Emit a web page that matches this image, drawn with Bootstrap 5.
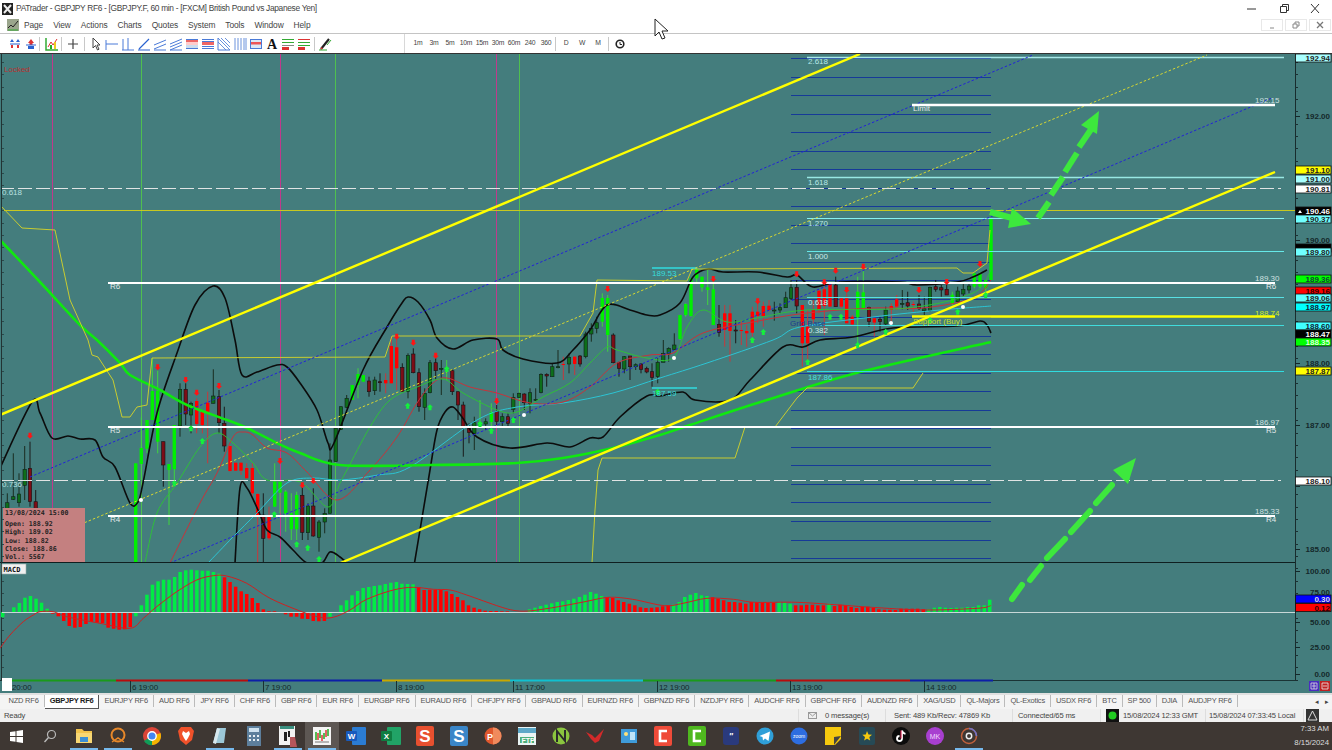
<!DOCTYPE html>
<html lang="en">
<head>
  <meta charset="UTF-8">
  <title>PATrader - GBPJPY RF6</title>
  <link href="https://cdn.jsdelivr.net/npm/bootstrap@5.3.3/dist/css/bootstrap.min.css" rel="stylesheet">
  <style>
    html, body { height: 750px; overflow: hidden; background: #fff; }
    body { font-family: "Liberation Sans", Arial, sans-serif; color: #333; }
    svg { display: block; }
    .app-shell { width: 1332px; height: 750px; position: relative; }

    .title-bar { height: 17px; font-size: 8.4px; letter-spacing: -.32px; color: #444; padding-left: 2px; gap: 3px; }
    .win-btns { gap: 17px; padding-right: 10px; }
    .menu-bar { height: 17px; font-size: 8.4px; color: #444; padding-left: 7px; border-bottom: 1px solid #c4c4c4; position: relative; }
    .menu-bar > span { letter-spacing: -.1px; margin-left: 10px; }
    .menu-bar > span:first-of-type { margin-left: 5px; }
    .mdi-btns { gap: 2px; margin-right: 1px; }
    .mdi-btn { width: 22px; height: 12px; border: 1px solid #e8e8e8; display: flex; align-items: center; justify-content: center; }
    .tool-bar { height: 19px; padding-left: 7px; font-size: 6.8px; color: #444; letter-spacing: -.2px; }
    .tool { width: 16px; display: flex; justify-content: center; text-align: center; white-space: nowrap; }
    .tool-sep { width: 1px; height: 14px; background: #c8c8c8; }
    .tf-divider { width: 1px; height: 19px; background: #d8d8d8; margin-left: 71px; margin-right: 5px; }

    .chart-wrap { height: 640px; background: #447d7d; border-top: 1px solid #333; }
    .chart-wrap text { font-family: "Liberation Sans", Arial, sans-serif; }
    .axis-txt { font-size: 8px; font-weight: 700; fill: #14282a; }
    .lvl-txt { font-size: 8px; fill: #b8e0e0; }
    .info-txt { font-family: "DejaVu Sans Mono", monospace !important; font-size: 6.6px; font-weight: 700; fill: #222; }
    .time-txt { font-size: 8px; fill: #14282a; letter-spacing: -.1px; }

    .tab-strip { height: 16px; background: #f4f4f4; border-top: 2px solid #e0e0e0; font-size: 7.5px; letter-spacing: -.22px; color: #555; white-space: nowrap; position: relative; padding-left: 3.5px; }
    .sym-tab { padding: 0 5px; border-right: 1px solid #bbb; line-height: 12px; height: 12px; }
    .sym-tab-on { font-weight: 700; color: #222; background: #fff; border-right: 1.5px solid #555; border-bottom: 1.5px solid #555; height: 14px; letter-spacing: -.28px; }
    .tab-scroll { position: absolute; right: 3px; top: 0; gap: 6px; color: #444; font-size: 7px; line-height: 13px; }

    .status-bar { height: 13px; background: #f0f0f0; font-size: 7.6px; letter-spacing: -.15px; color: #444; white-space: nowrap; }
    .st-cell { height: 13px; display: flex; align-items: center; border-left: 1px solid #ddd; flex: none; }

    .task-bar { height: 28px; background: #3e3733; color: #ddd; }
    .task-cell { width: 34.05px; height: 28px; display: flex; align-items: center; justify-content: center; flex: none; position: relative; }
    .task-on { background: #5d5753; }
    .task-open::after { content: ""; position: absolute; left: 3px; right: 3px; bottom: 0; height: 2px; background: #76b9ed; }
    .task-clock { font-size: 7.8px; line-height: 14px; text-align: right; padding-right: 3px; color: #ddd; }
    .task-icons { margin-left: -1px; }

    .mouse-cursor { position: absolute; left: 654px; top: 18px; }
  </style>
</head>
<body>
<div class="app-shell d-flex flex-column">

  <!-- window title -->
  <div class="title-bar d-flex align-items-center">
    <svg width="11" height="12" viewBox="0 0 11 12"><rect width="11" height="12" fill="#222"/><path d="M2 2l7 8M9 2l-7 8" stroke="#eee" stroke-width="2"/></svg>
    <span>PATrader - GBPJPY RF6 - [GBPJPY.F, 60 min - [FXCM] British Pound vs Japanese Yen]</span>
    <div class="win-btns d-flex align-items-center ms-auto">
      <svg width="14" height="10" viewBox="0 0 14 10"><path d="M1 5h9" stroke="#333"/></svg>
      <svg width="14" height="10" viewBox="0 0 14 10"><path d="M3.5 2.5h6v6h-6zM5.5 2.5v-2h6v6h-2" fill="none" stroke="#333"/></svg>
      <svg width="14" height="10" viewBox="0 0 14 10"><path d="M3 0l8 9M11 0l-8 9" stroke="#333"/></svg>
    </div>
  </div>

  <!-- menu -->
  <div class="menu-bar d-flex align-items-center">
    <svg width="12" height="12" viewBox="0 0 12 12"><rect width="12" height="12" fill="#9aa58c"/><path d="M1 9l3-3 2 2 5-6" stroke="#222" fill="none"/><path d="M1 11h10" stroke="#3a3"/></svg>
    <span>Page</span><span>View</span><span>Actions</span><span>Charts</span><span>Quotes</span><span>System</span><span>Tools</span><span>Window</span><span>Help</span>
    <div class="mdi-btns d-flex ms-auto">
      <div class="mdi-btn"><svg width="8" height="8" viewBox="0 0 8 8"><path d="M2 7h4" stroke="#888"/></svg></div>
      <div class="mdi-btn"><svg width="8" height="8" viewBox="0 0 8 8"><path d="M1 3h4v4H1zM3 3V1h4v4H5" fill="none" stroke="#888"/></svg></div>
      <div class="mdi-btn"><svg width="8" height="8" viewBox="0 0 8 8"><path d="M1 1l6 6M7 1L1 7" stroke="#777" stroke-width="1.3"/></svg></div>
    </div>
  </div>

  <!-- tool bar -->
  <div class="tool-bar d-flex align-items-center">
    <div class="tool"><svg width="12" height="12" viewBox="0 0 12 12"><path d="M1 4l2-3 2 3zM7 4l2-3 2 3z" fill="#2a62d0"/><path d="M1 6h10" stroke="#2a62d0"/><path d="M2 7h2v3H2zM8 7h2v3H8z" fill="#d33"/></svg></div>
    <div class="tool"><svg width="12" height="12" viewBox="0 0 12 12"><path d="M3 5l3-4 3 4z" fill="#d33"/><rect x="4.500" y="5" width="3" height="2" fill="#d33"/><path d="M1 7h10" stroke="#2a62d0"/><path d="M3 8h6v3H3z" fill="#2a62d0"/></svg></div>
    <div class="tool-sep" style="margin-right:4px"></div>
    <div class="tool"><svg width="14" height="14" viewBox="0 0 14 14"><path d="M1 1v12h12" fill="none" stroke="#3a3" stroke-width="1.500"/><path d="M3 10l3-5 2 3 4-6" fill="none" stroke="#d33"/><rect x="5" y="8" width="2" height="4" fill="#2a2"/><rect x="9" y="5" width="2" height="7" fill="#ec2"/></svg></div>
    <div class="tool-sep" style="margin:0 3px 0 1px"></div>
    <div class="tool"><svg width="14" height="14" viewBox="0 0 14 14"><path d="M7 2v10M2 7h10" stroke="#444" stroke-width="1.200"/></svg></div>
    <div class="tool-sep" style="margin:0 3px"></div>
    <div class="tool"><svg width="14" height="14" viewBox="0 0 14 14"><path d="M4 1v10l2.500-2.500L8.500 13l1.500-.8-2-4.200H11z" fill="#fff" stroke="#444"/></svg></div>
    <div class="tool"><svg width="14" height="14" viewBox="0 0 14 14"><path d="M1 7h12M1 3v10" stroke="#4a7ad8"/></svg></div>
    <div class="tool"><svg width="14" height="14" viewBox="0 0 14 14"><path d="M7 1v12M1 13h12M2 2v11" stroke="#4a7ad8"/></svg></div>
    <div class="tool"><svg width="14" height="14" viewBox="0 0 14 14"><path d="M2 12L12 2M1 13h12" stroke="#2a62d0" stroke-width="1.200"/></svg></div>
    <div class="tool"><svg width="14" height="14" viewBox="0 0 14 14"><path d="M1 8l12-5M1 12l12-5M1 13h12" stroke="#4a7ad8"/></svg></div>
    <div class="tool"><svg width="14" height="14" viewBox="0 0 14 14"><path d="M1 7l12-5M1 10l12-5M1 13l12-5" stroke="#4a7ad8"/><path d="M1 13h12" stroke="#4a7ad8"/></svg></div>
    <div class="tool"><svg width="14" height="14" viewBox="0 0 14 14"><rect x="1" y="3" width="12" height="2" fill="#e66"/><rect x="1" y="5" width="12" height="3" fill="#fcc"/><rect x="1" y="8" width="12" height="3" fill="#cde"/><path d="M1 2.500h12M1 11.500h12" stroke="#4a7ad8"/></svg></div>
    <div class="tool"><svg width="14" height="14" viewBox="0 0 14 14"><rect x="1" y="5" width="12" height="3" fill="#e66"/><path d="M1 2.500h12M1 4.500h12M1 9.500h12M1 11.500h12" stroke="#4a7ad8"/></svg></div>
    <div class="tool"><svg width="14" height="14" viewBox="0 0 14 14"><path d="M1 5l8 8M1 1l12 12M4 1l9 9M8 1l5 5" stroke="#6a92dc"/><path d="M1 1v12h12" fill="none" stroke="#4a7ad8"/></svg></div>
    <div class="tool"><svg width="14" height="14" viewBox="0 0 14 14"><path d="M2 1v12M5 1v12M8 1v12M11 1v12M13 1v12" stroke="#6a92dc"/></svg></div>
    <div class="tool"><svg width="14" height="14" viewBox="0 0 14 14"><rect x="1.500" y="2.500" width="11" height="9" fill="#dde8f4" stroke="#4a7ad8"/><rect x="2" y="5" width="10" height="2.500" fill="#e55"/></svg></div>
    <div class="tool"><svg width="14" height="14" viewBox="0 0 14 14"><text x="7" y="12" text-anchor="middle" font-family="Liberation Serif" font-weight="700" font-size="14" fill="#111">A</text></svg></div>
    <div class="tool"><svg width="14" height="14" viewBox="0 0 14 14"><path d="M1 2.500h12M1 5.500h12" stroke="#3a3"/><path d="M1 8.500h12" stroke="#888"/><rect x="1" y="10" width="7" height="3" fill="#d33"/></svg></div>
    <div class="tool"><svg width="14" height="14" viewBox="0 0 14 14"><path d="M1 2.500h12" stroke="#d33"/><path d="M1 5.500h12M1 8.500h12" stroke="#3a3"/><rect x="1" y="10" width="7" height="3" fill="#d33"/></svg></div>
    <div class="tool-sep" style="margin:0 2px"></div>
    <div class="tool"><svg width="14" height="14" viewBox="0 0 14 14"><path d="M3 12L11 2" stroke="#222" stroke-width="2.200"/><path d="M2 13l1.500-3 1.500 1.500z" fill="#d33"/><path d="M9 8l4-5M1 13h8" stroke="#3a3"/></svg></div>
    <div class="tf-divider"></div>
    <div class="tool">1m</div><div class="tool">3m</div><div class="tool">5m</div><div class="tool">10m</div><div class="tool">15m</div><div class="tool">30m</div><div class="tool">60m</div><div class="tool">240</div><div class="tool">360</div>
    <div class="tool-sep" style="margin:0 2px 0 1px"></div>
    <div class="tool">D</div><div class="tool">W</div><div class="tool">M</div>
    <div class="tool-sep" style="margin:0 3px 0 2px"></div>
    <div class="tool"><svg width="10" height="10" viewBox="0 0 10 10"><circle cx="5" cy="5" r="3.800" fill="none" stroke="#222" stroke-width="1.600"/><path d="M5 3v2.500h2" fill="none" stroke="#222"/></svg></div>
  </div>

  <!-- chart -->
  <div class="chart-wrap flex-shrink-0">
    <svg id="chart" width="1332" height="639" viewBox="0 54 1332 639"></svg>
  </div>

  <!-- symbol tabs -->
  <div class="tab-strip d-flex align-items-start">
    <span class="sym-tab">NZD RF6</span>
    <span class="sym-tab sym-tab-on">GBPJPY RF6</span>
    <span class="sym-tab">EURJPY RF6</span><span class="sym-tab">AUD RF6</span><span class="sym-tab">JPY RF6</span><span class="sym-tab">CHF RF6</span><span class="sym-tab">GBP RF6</span><span class="sym-tab">EUR RF6</span><span class="sym-tab">EURGBP RF6</span><span class="sym-tab">EURAUD RF6</span><span class="sym-tab">CHFJPY RF6</span><span class="sym-tab">GBPAUD RF6</span><span class="sym-tab">EURNZD RF6</span><span class="sym-tab">GBPNZD RF6</span><span class="sym-tab">NZDJPY RF6</span><span class="sym-tab">AUDCHF RF6</span><span class="sym-tab">GBPCHF RF6</span><span class="sym-tab">AUDNZD RF6</span><span class="sym-tab">XAG/USD</span><span class="sym-tab">QL-Majors</span><span class="sym-tab">QL-Exotics</span><span class="sym-tab">USDX RF6</span><span class="sym-tab">BTC</span><span class="sym-tab">SP 500</span><span class="sym-tab">DJIA</span><span class="sym-tab">AUDJPY RF6</span>
    <div class="tab-scroll d-flex"><span>&#9666;</span><span>&#9656;</span></div>
  </div>

  <!-- status bar -->
  <div class="status-bar d-flex align-items-center">
    <span class="ps-1" style="width:798px">Ready</span>
    <div class="st-cell" style="width:87px;padding-left:9px;gap:8px"><svg width="9" height="7" viewBox="0 0 9 7"><rect x=".5" y=".5" width="8" height="6" fill="#eee" stroke="#999"/><path d="M.5.500l4 3.500 4-3.500" fill="none" stroke="#999"/></svg><span>0 message(s)</span></div>
    <div class="st-cell" style="width:127px;padding-left:8px">Sent: 489 Kb/Recv: 47869 Kb</div>
    <div class="st-cell" style="width:88px;padding-left:5px">Connected/65 ms</div>
    <div class="st-cell" style="width:105px;padding-left:5px;gap:4px"><svg width="13" height="13" viewBox="0 0 13 13"><rect width="13" height="13" fill="#111"/><circle cx="6.500" cy="6.500" r="4" fill="#2c2"/></svg><span>15/08/2024 12:33 GMT</span></div>
    <div class="st-cell" style="width:98px;padding-left:3px">15/08/2024 07:33:45 Local</div>
    <div class="st-cell" style="padding-left:2px"><svg width="13" height="13" viewBox="0 0 13 13"><rect width="13" height="13" fill="#333"/><path d="M6.500 2L2 11h9z" fill="none" stroke="#ddd"/></svg></div>
  </div>

  <!-- windows task bar -->
  <div class="task-bar d-flex align-items-center">
    <div class="task-icons d-flex">
      <div class="task-cell"><svg width="13" height="13" viewBox="0 0 13 13" fill="#fff"><path d="M0 2l5.500-.8V6H0zM6.500 1l6.500-1v6H6.500zM0 7h5.500v4.800L0 11zM6.500 7H13v6l-6.500-1z"/></svg></div>
      <div class="task-cell"><svg width="14" height="14" viewBox="0 0 14 14"><circle cx="8.500" cy="5.500" r="4" fill="none" stroke="#bbb" stroke-width="1.200"/><path d="M5.500 8.500L1.500 13" stroke="#bbb" stroke-width="1.400"/></svg></div>
      <div class="task-cell task-open"><svg width="18" height="16" viewBox="0 0 18 16"><path d="M1 1h6l2 2h8v12H1z" fill="#f1c34d"/><rect x="1" y="5" width="16" height="10" fill="#f7d774"/><rect x="5" y="9" width="8" height="5" fill="#3b8fd6"/></svg></div>
      <div class="task-cell task-open"><svg width="18" height="18" viewBox="0 0 18 18"><circle cx="9" cy="8" r="6.500" fill="none" stroke="#e8882a" stroke-width="2"/><path d="M3 15l6-4 6 4" fill="none" stroke="#e8882a" stroke-width="1.500"/></svg></div>
      <div class="task-cell"><svg width="20" height="20" viewBox="0 0 20 20"><circle cx="10" cy="10" r="9" fill="#db4437"/><path d="M10 10L2 15a9 9 0 0 0 9 4z" fill="#0f9d58"/><path d="M10 10l8.500-3A9 9 0 0 1 10 19z" fill="#f4b400"/><circle cx="10" cy="10" r="4.200" fill="#4285f4" stroke="#fff" stroke-width="1.400"/></svg></div>
      <div class="task-cell"><svg width="18" height="20" viewBox="0 0 18 20"><path d="M4 1h10l3 4-2 9-6 5-6-5L1 5z" fill="#f0512a"/><path d="M9 7l3-2 1 3-2 4-2 3-2-3-2-4 1-3z" fill="#fff"/></svg></div>
      <div class="task-cell task-open"><svg width="16" height="20" viewBox="0 0 16 20"><path d="M5 2h9l-2 15H1z" fill="#9cc8d8"/><path d="M5 2l-4 15 3 1 4-15z" fill="#d8e8ee"/></svg></div>
      <div class="task-cell"><svg width="14" height="20" viewBox="0 0 14 20"><rect width="14" height="20" fill="#5d7f9c"/><rect x="2" y="2" width="10" height="4" fill="#cfe2ef"/><path d="M2 9h2v2H2zM6 9h2v2H6zM10 9h2v2h-2zM2 13h2v2H2zM6 13h2v2H6zM10 13h2v2h-2z" fill="#e8eef3"/></svg></div>
      <div class="task-cell task-open"><svg width="18" height="22" viewBox="0 0 18 22"><rect y="1" width="16" height="19" fill="#f2f2f2"/><rect x="1" y="1" width="14" height="3" fill="#3a8f7f"/><path d="M5 7h3v9H5zM9 6h2v6H9z" fill="#222"/><path d="M11 12h5l2 10h-7z" fill="#b5555a"/></svg></div>
      <div class="task-cell task-on task-open"><svg width="18" height="18" viewBox="0 0 18 18"><rect width="18" height="18" fill="#f4f4f4"/><path d="M3 5v8M7 3v8M11 6v6M15 2v7" stroke="#2a2" stroke-width="1.500"/><path d="M5 6v7M9 8v6M13 3v7" stroke="#d33" stroke-width="1.500"/><path d="M2 15h14" stroke="#777"/></svg></div>
      <div class="task-cell"><svg width="20" height="18" viewBox="0 0 20 18"><rect x="6" width="14" height="18" rx="1" fill="#2b7cd3"/><rect y="4" width="11" height="10" rx="1" fill="#185abd"/><text x="5.500" y="12" text-anchor="middle" font-size="8" font-weight="700" fill="#fff">W</text></svg></div>
      <div class="task-cell"><svg width="20" height="18" viewBox="0 0 20 18"><rect x="6" width="14" height="18" rx="1" fill="#21a366"/><rect y="4" width="11" height="10" rx="1" fill="#107c41"/><text x="5.500" y="12" text-anchor="middle" font-size="8" font-weight="700" fill="#fff">X</text></svg></div>
      <div class="task-cell"><svg width="18" height="20" viewBox="0 0 18 20"><rect width="18" height="20" rx="2" fill="#e8502f"/><text x="9" y="16" text-anchor="middle" font-size="17" font-weight="700" fill="#fff">S</text></svg></div>
      <div class="task-cell"><svg width="18" height="20" viewBox="0 0 18 20"><rect width="18" height="20" rx="2" fill="#3a86c8"/><text x="9" y="16" text-anchor="middle" font-size="17" font-weight="700" fill="#fff">S</text></svg></div>
      <div class="task-cell"><svg width="18" height="18" viewBox="0 0 18 18"><circle cx="9" cy="9" r="8.500" fill="#e0582e"/><path d="M9 .5a8.500 8.500 0 0 1 0 17z" fill="#f08a5d"/><text x="6" y="12.500" text-anchor="middle" font-size="9" font-weight="700" fill="#fff">P</text></svg></div>
      <div class="task-cell"><svg width="18" height="18" viewBox="0 0 18 18"><rect width="18" height="18" fill="#e9f4f4"/><rect y="1" width="18" height="5" fill="#5ca8c8"/><path d="M2 10h14v6H2z" fill="#4cae7b"/><text x="10" y="16" text-anchor="middle" font-size="7" font-weight="700" fill="#fff">FTP</text></svg></div>
      <div class="task-cell"><svg width="18" height="20" viewBox="0 0 18 20"><circle cx="9" cy="10" r="8.500" fill="#8bc53f"/><path d="M5 16V5l8 10V4" fill="none" stroke="#2b2b2b" stroke-width="2"/></svg></div>
      <div class="task-cell"><svg width="18" height="14" viewBox="0 0 18 14"><path d="M0 3l6 3 3 3 9-9-5 12-4 2-4-4z" fill="#d32a2a"/></svg></div>
      <div class="task-cell"><svg width="16" height="14" viewBox="0 0 16 14"><rect width="16" height="14" fill="#3f9bd9"/><circle cx="5" cy="5" r="2" fill="#ffe27a"/><rect x="9" y="3" width="5" height="8" fill="#bfe3f7"/></svg></div>
      <div class="task-cell"><svg width="18" height="20" viewBox="0 0 18 20"><rect width="18" height="20" rx="2" fill="#ef4b39"/><path d="M13 5H6v10h7" fill="none" stroke="#fff" stroke-width="2.600"/></svg></div>
      <div class="task-cell"><svg width="18" height="20" viewBox="0 0 18 20"><rect width="18" height="20" rx="2" fill="#4fb81f"/><path d="M13 5H6v10h7" fill="none" stroke="#fff" stroke-width="2.600"/></svg></div>
      <div class="task-cell"><svg width="16" height="18" viewBox="0 0 16 18"><rect width="16" height="18" rx="3" fill="#2a3a7c"/><text x="8" y="12" text-anchor="middle" font-size="9" font-style="italic" font-weight="700" fill="#fff">"</text></svg></div>
      <div class="task-cell"><svg width="18" height="18" viewBox="0 0 18 18"><circle cx="9" cy="9" r="8.500" fill="#2f9fd8"/><path d="M3.500 9L14 4.500 12.500 14l-3.500-2.500-2 2-.5-3.500z" fill="#fff"/></svg></div>
      <div class="task-cell"><svg width="18" height="18" viewBox="0 0 18 18"><circle cx="9" cy="9" r="8.500" fill="#2d6de0"/><text x="9" y="11" text-anchor="middle" font-size="5" fill="#fff">zoom</text></svg></div>
      <div class="task-cell"><svg width="16" height="18" viewBox="0 0 16 18"><path d="M0 0h16v12l-6 6H0z" fill="#f6c90e"/><path d="M16 9l-7 1v8z" fill="#444"/></svg></div>
      <div class="task-cell"><svg width="16" height="18" viewBox="0 0 16 18"><rect width="16" height="18" rx="2" fill="#264a56"/><path d="M8 4l1.500 3.500 3.500.3-2.700 2.300.9 3.500L8 11.700l-2.900 1.900.9-3.500-2.700-2.300 3.500-.3z" fill="#f6c90e"/></svg></div>
      <div class="task-cell"><svg width="18" height="18" viewBox="0 0 18 18"><circle cx="9" cy="9" r="9" fill="#0b0b0b"/><path d="M10 3.500v8a2.500 2.500 0 1 1-2.500-2.500M10 3.500c.4 2 1.500 3 3.500 3.300" fill="none" stroke="#fff" stroke-width="1.800"/><path d="M9 3.500v8" stroke="#ee1d52"/></svg></div>
      <div class="task-cell"><svg width="18" height="18" viewBox="0 0 18 18"><circle cx="9" cy="9" r="9" fill="#a83fd0"/><text x="9" y="11.500" text-anchor="middle" font-size="7" fill="#f5d8ff">MK</text></svg></div>
      <div class="task-cell task-open"><svg width="18" height="18" viewBox="0 0 18 18"><circle cx="9" cy="9" r="7.500" fill="none" stroke="#c0603c" stroke-width="1.500"/><path d="M9 1.500a7.500 7.500 0 0 1 7.500 7.500" fill="none" stroke="#6f73c8" stroke-width="1.500"/><circle cx="9" cy="9" r="2.700" fill="none" stroke="#eee" stroke-width="1.500"/></svg></div>
    </div>
    <div class="task-clock ms-auto"><div>7:33 AM</div><div>8/15/2024</div></div>
  </div>

  <svg class="mouse-cursor" width="15" height="22" viewBox="0 0 15 22"><path d="M1 1v17l4-4 3 7 3-1-3-7h6z" fill="#fff" stroke="#222"/></svg>
</div>

<script>
  // everything inside the chart canvas is given in page pixels (viewBox starts at y=54)
  let s = '';
  const BG_RED = '#ff0000', BG_GREEN = '#00f000';
  const line = (x1, y1, x2, y2, c, w, extra) => { s += `<line x1="${x1}" y1="${y1}" x2="${x2}" y2="${y2}" stroke="${c}" stroke-width="${w}" ${extra || ''}/>`; };
  const text = (x, y, t, cls, extra) => { s += `<text x="${x}" y="${y}" class="${cls}" ${extra || ''}>${t}</text>`; };

  // catmull-rom so the bands don't look polygonal
  function curve(p, c, w) {
    let d = `M${p[0][0]} ${p[0][1]}`;
    for (let i = 0; i < p.length - 1; i++) {
      const a = p[i - 1] || p[i], b = p[i], e = p[i + 1], f = p[i + 2] || e;
      d += `C${(b[0] + (e[0] - a[0]) / 6).toFixed(1)} ${(b[1] + (e[1] - a[1]) / 6).toFixed(1)} ${(e[0] - (f[0] - b[0]) / 6).toFixed(1)} ${(e[1] - (f[1] - b[1]) / 6).toFixed(1)} ${e[0]} ${e[1]}`;
    }
    s += `<path d="${d}" fill="none" stroke="${c}" stroke-width="${w}" stroke-linejoin="round"/>`;
  }
  const poly = (str, c, w) => { s += `<polyline points="${str}" fill="none" stroke="${c}" stroke-width="${w}"/>`; };

  s += '<defs><clipPath id="mainClip"><rect x="2" y="54" width="1293" height="509"/></clipPath></defs><g clip-path="url(#mainClip)">';

  // period separators
  [52.5, 280.5, 496.5].forEach(x => line(x, 54, x, 563, '#c0398c', 1));
  [141.5, 335.5, 519.5].forEach(x => line(x, 54, x, 563, '#4fc04f', 1));

  // dark blue fibonacci grid
  for (let i = 0; i < 28; i++) { const y = Math.round(58 + 18.52 * i) + .5; line(791, y, 991, y, '#163a98', 1.200); }

  // candles: x, wick top, wick bottom, body top, body bottom, kind - read off the picture at 3x
  const groups = [
    [0, 340, '22 460 560 488 530 g|40 340 480 470 478 g|57 400 500 462 488 g|74 318 480 388 436 g|90 305 500 385 485 r|107 450 580 485 540 r|407 370 670 370 670 G|424 232 420 324 372 G|441 240 340 240 326 G|457 55 240 153 240 G|473 92 340 152 305 G|490 305 440 305 375 r|507 372 555 372 390 G|523 255 430 255 388 G|540 130 290 148 258 g|557 130 255 148 222 r|573 185 280 190 225 g|590 175 280 183 252 R|607 215 280 215 255 R|623 155 370 188 215 R|640 88 190 168 190 g|657 150 280 170 248 r|673 200 335 250 318 r|690 318 395 318 393 R|707 368 392 368 392 R|723 368 405 368 392 R|740 370 415 384 415 R|757 370 475 384 460 R|773 460 670 462 525 R|790 460 670 525 595 r|807 500 600 525 595 R|824 370 500 425 500 G|840 425 520 425 458 G|857 450 575 455 520 G|874 460 600 520 568 G|890 455 600 465 568 G|907 440 600 466 577 r|924 490 600 498 578 g|940 445 590 498 588 r|957 540 635 546 592 g|974 505 580 520 546 g|990 310 520 360 520 g|1007 265 365 265 365 g'],
    [330, 270, '33 410 480 410 478 g|50 375 415 385 412 g|67 345 390 345 390 G|84 295 385 312 345 G|100 315 335 315 335 G|117 320 380 333 365 r|134 320 375 330 362 g|150 310 365 335 337 r|167 310 370 330 340 R|184 200 340 228 340 R|200 205 360 232 295 R|217 280 365 292 365 r|234 250 385 256 365 g|250 235 310 252 308 r|267 295 425 308 410 r|284 355 450 370 412 g|300 270 370 278 368 g|317 265 330 278 302 r|334 270 375 295 298 g|350 270 330 292 303 G|367 298 375 302 365 r|384 365 450 365 405 r|400 395 560 405 472 r|417 460 520 472 488 r|433 440 540 458 490 g|450 390 470 456 468 G|467 445 480 455 462 g|484 400 470 426 456 G|500 405 465 424 455 r|517 430 470 440 455 g|534 430 470 440 460 r|550 370 430 382 418 g|567 368 384 370 382 g|583 370 420 372 398 r|600 355 430 368 400 g|617 355 395 388 390 g|633 310 370 313 368 g|650 310 350 313 318 r|667 280 320 290 320 g|684 240 295 290 292 g|700 260 330 282 285 R|717 250 310 262 282 g|734 258 315 260 282 R|750 255 290 258 282 r|767 185 265 192 260 g|784 160 215 175 192 g|800 140 190 158 175 g|817 70 170 84 155 G|833 75 245 84 195 G|850 190 280 195 278 r|867 275 320 278 295 r|883 258 310 260 297 g|900 258 330 258 290 r|917 280 300 284 290 g|933 280 310 282 298 r'],
    [640, 230, '20 410 430 415 426 r|36 400 470 425 442 r|53 385 460 397 440 g|70 330 390 370 397 g|86 352 395 355 372 g|103 310 360 345 358 g|120 255 330 255 327 G|137 220 260 222 255 G|153 145 260 145 258 G|170 115 160 118 145 G|186 140 185 140 172 G|203 120 225 172 180 G|220 155 285 178 285 G|237 225 320 283 308 r|254 225 350 250 300 R|270 225 395 250 303 R|287 270 340 300 302 r|304 270 345 300 302 R|320 285 350 303 310 R|337 230 320 245 308 R|353 220 280 245 258 R|370 215 290 228 258 R|387 210 245 227 240 R|403 215 272 240 243 g|420 220 250 233 240 g|437 185 230 203 233 g|453 150 210 173 205 g|470 150 250 172 228 r|487 225 410 225 340 R|503 240 400 290 340 R|520 210 280 240 268 R|537 180 250 182 240 R|553 170 315 178 228 R|570 160 205 160 230 R|587 140 230 165 230 r|604 205 235 205 230 R|620 190 280 205 280 R|637 255 285 260 283 R|653 140 340 185 262 G|670 120 240 187 235 G|687 230 290 232 275 r|703 265 320 265 278 R|720 260 305 268 275 r|737 230 285 240 282 g|754 220 275 228 240 R|770 195 240 208 230 R|787 180 238 220 222 g|803 185 240 218 228 r|820 215 245 222 224 R|837 195 240 222 236 r|853 200 255 236 242 g|870 170 245 172 242 g|887 150 185 170 178 r|904 165 200 173 180 r|920 160 195 178 195 r|937 185 225 194 222 G|953 170 220 183 215 g|970 160 200 178 192 g|987 160 190 168 180 g|1003 130 175 130 170 G|1020 125 175 130 170 G|1037 150 185 150 175 G|1053 -36 150 -36 150 G']
  ];
  const look = {
    g: ['#1a2c20', '#0d6e1a', '#10201a'], r: ['#1a1a1a', '#7c0d16', '#141414'],
    G: ['#3fd63f', BG_GREEN, 'none'], R: ['#c8383c', BG_RED, 'none']
  };
  groups.forEach(([ox, oy, str]) => str.split('|').forEach(row => {
    const v = row.split(' '), k = look[v[5]];
    const x = ox + v[0] / 3, wt = oy + v[1] / 3, wb = oy + v[2] / 3, bt = oy + v[3] / 3, bb = oy + v[4] / 3;
    line(x.toFixed(1), wt.toFixed(1), x.toFixed(1), wb.toFixed(1), k[0], 1);
    s += `<rect x="${(x - 1.7).toFixed(1)}" y="${bt.toFixed(1)}" width="3.400" height="${Math.max(bb - bt, 1).toFixed(1)}" fill="${k[1]}" stroke="${k[2]}" stroke-width=".6"/>`;
  }));

  // moving averages and bands
  curve([[0,468],[32,402],[40,413],[52,438],[68,436],[80,439],[95,440],[103,457],[115,467],[130,503],[138,502],[143,483],[157,413],[177,353],[195,305],[213,286],[225,298],[235,340],[242,375],[257,372],[277,365],[287,367],[300,383],[317,410],[328,443],[334,443],[363,370],[387,327],[402,303],[408,297],[418,302],[430,320],[437,338],[453,349],[473,340],[497,339],[503,350],[523,359],[557,363],[573,350],[590,330],[607,305],[630,310],[647,315],[660,315],[680,303],[693,277],[708,269],[723,272],[757,272],[787,277],[797,275],[813,287],[840,282],[900,282],[917,285],[957,282],[973,277],[987,270]], '#0c0c0c', 1.600);
  curve([[235,563],[240,488],[247,488],[258,510],[267,530],[280,537],[293,550],[307,563],[322,563],[330,552],[340,557],[350,566]], '#0c0c0c', 1.600);
  curve([[414,566],[430,470],[437,430],[445,412],[453,407],[462,417],[477,437],[510,448],[547,443],[570,447],[590,438],[603,437],[620,417],[647,396],[660,396],[683,392],[695,400],[730,400],[750,380],[783,347],[803,347],[820,340],[853,337],[893,328],[957,326],[980,321],[987,325],[991,333]], '#0c0c0c', 1.600);
  curve([[208,563],[233,537],[257,513],[287,483],[313,478],[340,480],[378,475],[410,467],[477,420],[517,407],[563,403],[613,393],[660,378],[707,363],[773,340],[800,327],[873,317],[940,310],[991,306]], '#2cc4d4', 1);
  curve([[170,563],[200,503],[217,473],[233,437],[243,432],[253,435],[267,448],[287,453],[307,472],[337,500],[370,470],[397,437],[417,403],[433,383],[447,378],[470,387],[497,393],[530,403],[563,402],[590,387],[617,363],[650,355],[673,353],[703,333],[753,322],[807,313],[873,308],[923,308],[973,298],[991,280]], '#c8323a', 1);
  curve([[145,563],[157,513],[177,483],[200,447],[217,433],[233,443],[253,463],[267,480],[300,482],[328,507],[340,483],[347,470],[370,427],[390,400],[417,387],[443,379],[463,393],[497,410],[517,412],[543,397],[570,383],[590,363],[607,347],[617,350],[647,358],[673,358],[687,327],[703,310],[727,322],[757,318],[807,310],[907,308],[973,293],[991,270]], '#2fbf3a', 1);
  curve([[0,240],[40,282],[80,325],[97,340],[120,363],[130,375],[160,390],[187,405],[227,420],[247,428],[277,443],[300,453],[340,465],[430,465],[517,463],[563,458],[613,448],[660,435],[690,425],[767,400],[860,372],[991,342]], '#10e810', 2.600);

  // stepped trailing lines
  poly('0,205 22,228 55,230 70,300 88,340 92,355 98,357 113,380 122,417 130,417 137,407 147,405 152,358 385,357 392,336 580,336 593,313 597,280 687,281 692,269 957,268 963,273 973,273 987,263 990,230', '#c8cc30', 1);
  poly('592,563 595,510 598,470 602,458 735,458 745,427 775,427 797,398 807,388 913,388 923,373', '#c8cc30', 1);
  line(0, 210.5, 1295, 210.5, '#c8c820', 1);

  // fib retracement levels
  [[57.500,'#a8e8e8'],[177.500,'#98e8e4'],[218.500,'#88f0f0'],[251.500,'#66e8e8'],[297.500,'#58e0e4'],[325.500,'#40dcdc'],[371.500,'#30dce0']].forEach(([y, c]) => line(807, y, 1284, y, c, y < 200 ? 1.500 : 1));
  line(652, 268, 697, 268, '#30dce0', 1.500);
  line(652, 388, 697, 388, '#30dce0', 1.500);

  // channel midlines, dotted
  line(30, 477, 1033, 55, '#2222d8', 1, 'stroke-dasharray="2.500 2"');
  line(170, 563, 1272, 98, '#2222d8', 1, 'stroke-dasharray="2.500 2"');
  line(43, 540, 1207, 55, '#d8d830', 1, 'stroke-dasharray="2.500 2"');

  // support/resistance levels
  [283, 427, 516].forEach(y => line(108, y, 1275, y, '#fff', 2));
  line(912, 105, 1275, 105, '#fff', 2.400);
  line(912, 316.500, 1275, 316.500, '#ffff00', 2.600);
  [188.5, 480.5].forEach(y => line(0, y, 1281, y, '#e0e4e4', 1, 'stroke-dasharray="14 4"'));

  // main channel
  line(0, 415, 860, 54, '#ffff00', 2.400);
  line(338, 564, 1275, 172, '#ffff00', 2.400);

  // signal arrows on candles
  const dn = (x, y) => `<polygon points="${x - 1.500},${y - 3} ${x + 1.500},${y - 3} ${x + 1.500},${y} ${x + 3},${y} ${x},${y + 3} ${x - 3},${y} ${x - 1.500},${y}" fill="#ff1414"/>`;
  const up = (x, y) => `<polygon points="${x - 1.500},${y + 3} ${x + 1.500},${y + 3} ${x + 1.500},${y} ${x + 3},${y} ${x},${y - 3} ${x - 3},${y} ${x - 1.500},${y}" fill="#14f03c"/>`;
  const at = (list, ox, oy, fn) => list.forEach(([x, y]) => { s += fn(+(ox + x / 3).toFixed(1), +(oy + y / 3).toFixed(1)); });
  at([[90,287],[473,82],[557,120],[590,158],[657,138],[840,363],[907,436],[940,423]], 0, 340, dn);
  at([[200,200],[250,218],[317,257],[500,394],[833,57]], 330, 270, dn);
  at([[220,147],[353,214],[470,133],[553,157],[587,122],[620,180],[670,110],[837,180],[920,156],[1020,102]], 640, 230, dn);
  at([[573,265],[607,303],[523,430],[823,523],[890,613],[923,623],[957,657]], 0, 340, up);
  at([[233,407],[300,412],[350,297],[450,462],[484,482],[550,450]], 330, 270, up);
  at([[337,330],[370,306],[503,396],[570,260],[603,260],[737,305],[870,270],[953,245],[1037,195],[653,345],[53,485]], 640, 230, up);
  [[141,500],[524,415],[674,358],[891,323],[963,307]].forEach(([x, y]) => { s += `<circle cx="${x}" cy="${y}" r="2" fill="#fff"/>`; });

  // level captions
  text(2, 195, '0.618', 'lvl-txt');
  text(2, 487, '0.736', 'lvl-txt');
  text(4, 72, 'Locked', 'lvl-txt', 'style="fill:#b83030"');
  [['2.618',64,'#b8e8e8'],['1.618',185,'#b8e8e8'],['1.270',226,'#b8e8e8'],['1.000',259,'#c8e8e8'],['0.618',305,'#c8e8e8'],['0.382',333,'#c8e8e8'],['187.86',380,'#48e0e0']].forEach(([t, y, c]) => text(808, y, t, 'lvl-txt', `style="fill:${c}"`));
  text(652, 276, '189.53', 'lvl-txt', 'style="fill:#38dcdc"');
  text(652, 396, '187.59', 'lvl-txt', 'style="fill:#38dcdc"');
  text(790, 326, 'Grid Base', 'lvl-txt', 'style="fill:#1c3a90"');
  text(913, 324, 'Support (Buy)', 'lvl-txt', 'style="fill:#c8e020"');
  text(913, 111, 'Limit', 'lvl-txt', 'style="fill:#e8e8e8"');
  [['R6',110,289],['R5',110,433],['R4',110,522],['R6',1266,289],['R5',1266,433],['R4',1266,522]].forEach(([t, x, y]) => text(x, y, t, 'lvl-txt', 'style="fill:#e0e8e8"'));
  [['192.15',103],['189.30',281],['186.97',425],['185.33',514]].forEach(([t, y]) => text(1255, y, t, 'lvl-txt', 'style="fill:#d0e0e0"'));
  text(1255, 316, '188.74', 'lvl-txt', 'style="fill:#d4f020"');

  // crosshair info box
  s += '<rect x="3" y="508" width="82" height="55" fill="#c48080"/>';
  text(5, 515, '13/08/2024 15:00', 'info-txt');
  ['Open: 188.92', 'High: 189.02', 'Low: 188.82', 'Close: 188.86', 'Vol.: 5567'].forEach((t, i) => text(5, 526 + i * 8.300, t, 'info-txt'));
  s += '</g>';

  // separator between panes and frame
  line(0, 562.500, 1295, 562.500, '#0f1f20', 1);
  line(0, 680.500, 1295, 680.500, '#1a3334', 1);
  line(1295.500, 54, 1295.500, 681, '#182c2d', 1);
  line(1.500, 54, 1.500, 681, '#233', 1);
  for (let y = 62; y < 680; y += 12.35) {
    const yy = Math.round(y) + .5;
    line(1295, yy, 1298, yy, '#1a3032', 1);
    line(2, yy, 4, yy, '#2a4a4c', 1);
  }
  [116, 240, 363, 425, 486, 549, 571, 622, 647, 674].forEach(y => line(1295, y + .5, 1300, y + .5, '#14282a', 1));

  // MACD pane
  s += '<rect x="2" y="564" width="24" height="10" fill="#f0f0f0" stroke="#9aa" stroke-width=".6"/>';
  text(3.500, 572, 'MACD', 'info-txt', 'style="fill:#111;font-size:7px !important"');
  const macd = [
    ['g', [-16,0,14,27,43,48,40,28,10]],
    ['r', [-5,-13,-27,-42,-47,-45,-36,-30,-32,-33,-47,-50,-53,-52,-45]],
    ['g', [-13,20,52,82,92,97,97,105,120,125,127,125,124,124,120,115]],
    ['r', [104,90,76,62,54,42,27,8,2,2,0,-7,-14,-14,-20,-21,-27,-28,-27]],
    ['g', [-14,0,20,35,50,63,72,75,78,80,84,88,90,85,84,83]],
    ['r', [75,66,67,66,66,62,54,45,35,20,13,8,4,3,3,2,2,-2,-3,-3]],
    ['g', [8,13,18,22,26,30,32,36,40,45,52,60,55,48]],
    ['r', [45,42,35,30,25,20,14,12,13,14,17,20]],
    ['g', [22,30,45,52,57,50,48]],
    ['r', [44,40,35,30,30,28,25,30,29,30,28,28]],
    ['g', [30,28,25]],
    ['r', [20,20,22,22,20,20]],
    ['g', [25]],
    ['r', [18,22,20,15,12,16,16,12,8,7,7,6,10,10,10,10,8]],
    ['g', [8,13,15,13,12,13,13,15,15,20,20,37]]
  ];
  let bar = 0;
  macd.forEach(([k, vals]) => vals.forEach(v => {
    const x = 2.700 + bar * 5.545, h = Math.abs(v) / 3, y = v > 0 ? 612 - h : 612;
    if (v) s += `<rect x="${(x - 1.700).toFixed(1)}" y="${y.toFixed(1)}" width="3.500" height="${h.toFixed(1)}" fill="${k === 'g' ? '#00ec44' : '#ff0000'}"/>`;
    bar++;
  }));
  line(2, 612.500, 1295, 612.500, '#c8d8d8', 1);
  const sig = [[0,265],[30,225],[70,185],[100,165],[120,155],[160,155],[200,170],[300,190],[390,205],[430,175],[470,140],[530,95],[590,60],[640,47],[680,48],[740,70],[810,115],[900,153],[960,172],[1000,172],[1050,150],[1100,118],[1180,90],[1240,82],[1300,88],[1350,90],[1400,105],[1500,140]].map(([x, y]) => [+(x / 3).toFixed(1), +(560 + y / 3).toFixed(1)])
    .concat([[30,152],[60,152],[110,140],[160,125],[205,112],[250,118],[310,137],[345,130],[390,115],[440,118],[480,127],[560,127],[640,135],[700,142],[800,150],[900,145],[925,137]].map(([x, y]) => [+(500 + x / 1.885).toFixed(1), +(560 + y / 3).toFixed(1)]));
  curve(sig, '#d02020', 1);

  // coloured period strip on the time axis
  [[11,116,'#1a9a1a'],[116,248,'#b80c0c'],[248,382,'#0c1ea8'],[382,510,'#c8a800'],[510,643,'#10c0d0'],[643,776,'#1a9a1a'],[776,910,'#b80c0c'],[910,993,'#0c1ea8']].forEach(([a, b, c]) => line(a, 680.500, b, 680.500, c, 2));

  // time axis
  [['6 19:00',130.5],['7 19:00',263.5],['8 19:00',396.500],['11 17:00',513.5],['12 19:00',657.500],['13 19:00',790.5],['14 19:00',924.5]].forEach(([t, x]) => {
    line(x, 681, x, 692, '#1a3032', 1);
    text(x + 1.500, 690, t, 'time-txt');
  });
  text(12, 690, '20:00', 'time-txt');
  s += '<rect x="2" y="678" width="10" height="13" fill="#fff"/>';
  s += '<rect x="1309" y="681" width="10" height="10" fill="#4a2cc0"/><path d="M1311 683h6v6h-6zM1314 683v6M1312 686h4" fill="none" stroke="#ddd" stroke-width=".8"/>';
  s += '<rect x="1320" y="681" width="10" height="10" fill="#c02020"/><path d="M1322 683h6v6h-6zM1323 686h4" fill="none" stroke="#eee" stroke-width=".8"/>';

  // price tags on the axis, top to bottom in stacking order
  const tag = (y, t, bg, fg) => {
    s += `<rect x="1295.500" y="${y - 4}" width="35.500" height="8" fill="${bg}" stroke="#111" stroke-width=".8"/>`;
    if (t) text(1330, y + 3, t, 'axis-txt', `text-anchor="end" style="fill:${fg}"`);
  };
  [['192.00',116],['190.00',240],['188.00',363],['187.00',425],['185.00',549],['100.00',571],['75.00',592],['50.00',622],['25.00',647],['0.00',674]].forEach(([t, y]) => text(1330, y + 3, t, 'axis-txt', 'text-anchor="end"'));
  tag(58, '192.94', '#a8ffff', '#222');
  tag(170, '191.10', '#ffff00', '#222');
  tag(179, '191.00', '#a8ffff', '#222');
  tag(189, '190.81', '#fff', '#222');
  tag(211, '190.46', '#000', '#fff');
  s += '<path d="M1298 213l2-3 2 3z" fill="#fff"/>';
  tag(219, '190.37', '#70ffff', '#222');
  tag(248, '', '#000', '#fff');
  tag(252, '189.80', '#70ffff', '#222');
  tag(279, '189.36', '#00ff00', '#143');
  tag(291, '189.16', '#ff0000', '#300');
  tag(298, '189.06', '#60ffff', '#222');
  tag(307, '188.97', '#00ffff', '#123');
  tag(326, '188.60', '#40ffff', '#123');
  tag(334, '188.47', '#000', '#fff');
  tag(342, '188.35', '#00ff00', '#dfd');
  tag(371, '187.87', '#ffff00', '#222');
  tag(481, '186.10', '#fff', '#222');
  tag(599, '0.30', '#0000ff', '#ddd');
  tag(607.5, '0.12', '#ff0000', '#300');

  // hand drawn green arrows
  const G = '#3de83d';
  [[1038,218,1049,202],[1051,195,1063,177],[1065,172,1077,153],[1079,147,1092,128]].forEach(a => line(a[0], a[1], a[2], a[3], G, 6));
  s += `<polygon points="1099,111 1081,125 1097,134" fill="${G}"/>`;
  line(990, 212, 1012, 218, G, 6);
  s += `<polygon points="1031,224 1012,208 1008,228" fill="${G}"/>`;
  [[1012,599,1022,585],[1030,580,1041,566],[1047,558,1065,539],[1071,532,1090,511],[1096,503,1112,485]].forEach(a => line(a[0], a[1], a[2], a[3], G, 6, 'stroke-linecap="round"'));
  s += `<polygon points="1136,458 1113,470 1128,484" fill="${G}"/>`;

  document.getElementById('chart').innerHTML = s;
</script>
<script src="https://cdn.jsdelivr.net/npm/bootstrap@5.3.3/dist/js/bootstrap.bundle.min.js"></script>
</body>
</html>
